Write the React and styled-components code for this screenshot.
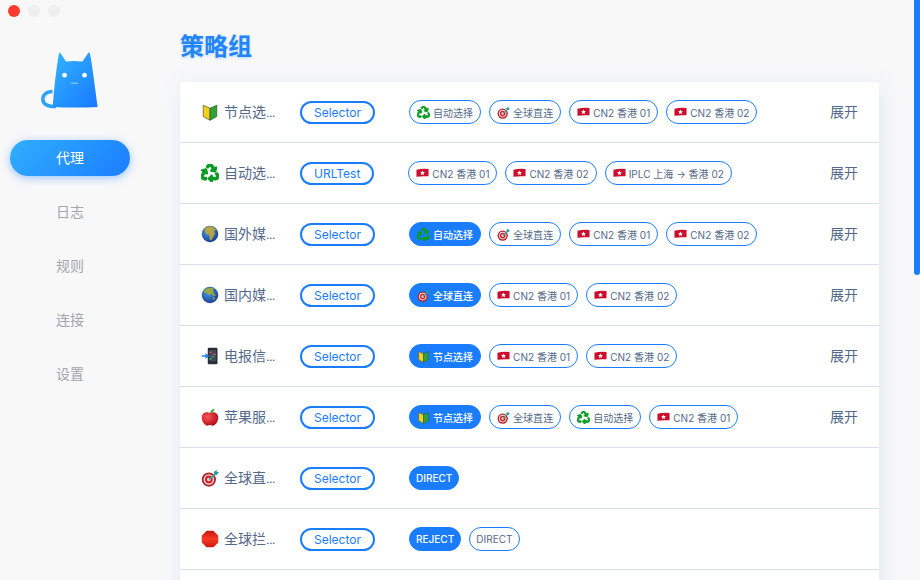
import React from "react";
import styled, { createGlobalStyle } from "styled-components";
import { FaRecycle } from "react-icons/fa";

const GlobalStyle = createGlobalStyle`
    html, body {
        margin: 0;
        height: 100%;
        overflow: hidden;
        background: #f8f8f9;
    }
    * { box-sizing: border-box; }
`;

const Window = styled.div`
    display: flex;
    width: 920px;
    height: 580px;
    overflow: hidden;
    position: relative;
    background: #f8f8f9;
    font-family: Inter, "Noto Sans CJK SC", sans-serif;
`;

const Sidebar = styled.aside`
    flex: 0 0 160px;
    display: flex;
    flex-direction: column;
    align-items: center;
`;

const TrafficLights = styled.div`
    align-self: flex-start;
    display: flex;
    gap: 8px;
    padding: 5px 0 0 8px;
`;

const Light = styled.span`
    width: 12px;
    height: 12px;
    border-radius: 50%;
    background: ${(p) => p.$color};
`;

const Logo = styled.svg`
    width: 62px;
    height: 60px;
    margin: 33px 0 30px -21px;
    display: block;
`;

const Nav = styled.nav`
    display: flex;
    flex-direction: column;
    gap: 18px;
    width: 120px;
    margin-right: 20px;
`;

const NavItem = styled.div`
    height: 36px;
    line-height: 35px;
    border-radius: 18px;
    text-align: center;
    font-size: 14px;
    color: ${(p) => (p.$active ? "#fff" : "#a2a6ad")};
    background: ${(p) => (p.$active ? "linear-gradient(135deg, #30aeff, #1a7dff)" : "transparent")};
    box-shadow: ${(p) => (p.$active ? "0 2px 8px rgba(42, 130, 255, 0.45)" : "none")};
`;

const Main = styled.main`
    flex: 1;
    padding: 30px 41px 0 20px;
    min-width: 0;
`;

const Title = styled.h1`
    margin: 0 0 17px;
    height: 35px;
    line-height: 34px;
    font-size: 24px;
    font-weight: 700;
    color: #1f85f8;
    text-shadow: 0 1px 3px rgba(31, 133, 248, 0.3);
`;

const Card = styled.section`
    background: #fff;
    border-radius: 4px 4px 0 0;
    box-shadow: 2px 5px 20px rgba(190, 210, 240, 0.45);
`;

const Row = styled.div`
    height: 61px;
    display: flex;
    align-items: center;
    padding: 0 21px;
    border-bottom: 1px solid #d8dfe8;
`;

const NameCell = styled.div`
    flex: 0 0 99px;
    display: flex;
    align-items: center;
    gap: 5px;
    color: #54698a;
    font-size: 14px;
`;

const EmojiBox = styled.span`
    flex: 0 0 ${(p) => p.$size}px;
    width: ${(p) => p.$size}px;
    height: ${(p) => p.$size}px;
    display: flex;
    align-items: center;
    justify-content: center;

    svg { display: block; }
`;

const Name = styled.span`
    width: 54px;
    line-height: 20px;
    font-family: Roboto, "Noto Sans CJK SC", sans-serif;
    white-space: nowrap;
    overflow: hidden;
    text-overflow: ellipsis;
`;

const TypeTag = styled.span`
    flex: none;
    height: 23px;
    line-height: 19px;
    padding: 0 12px;
    border: 2px solid #1a7dff;
    border-radius: 12px;
    font-size: 12px;
    color: #1a7dff;
`;

const Chips = styled.div`
    flex: 1;
    display: flex;
    gap: 8px;
    margin-left: 34px;
`;

const Chip = styled.span`
    height: 24px;
    display: flex;
    align-items: center;
    gap: 3px;
    padding: 0 ${(p) => (p.$plain ? 6 : 7)}px;
    border: 1px solid #1a7dff;
    border-radius: 12px;
    font-size: 10px;
    letter-spacing: 0.02px;
    white-space: nowrap;
    color: ${(p) => (p.$active ? "#fff" : "#54698a")};
    background: ${(p) => (p.$active ? "#1a7dff" : "#fff")};
    font-weight: ${(p) => (p.$active ? 500 : 400)};
`;

const Expand = styled.span`
    font-size: 14px;
    line-height: 20px;
    padding-bottom: 1px;
    color: #54698a;
`;

const ScrollThumb = styled.div`
    position: absolute;
    top: 0;
    right: 0;
    width: 6px;
    height: 275px;
    background: #1a7dff;
    border-radius: 0 0 3px 3px;
`;

const Shield = () => (
    <svg viewBox="0 0 24 24" width="100%" height="100%">
        <path d="M3 3 L12 7 L12 23 L3 18Z" fill="#f4d01f" stroke="#5c5a20" strokeWidth="1" />
        <path d="M21 3 L12 7 L12 23 L21 18Z" fill="#2fa33a" stroke="#2f5a28" strokeWidth="1" />
    </svg>
);

const Recycle = () => <FaRecycle size="100%" color="#0a9c24" stroke="#0a9c24" strokeWidth="36" />;

const Target = () => (
    <svg viewBox="0 0 24 24" width="100%" height="100%">
        <circle cx="10.5" cy="14" r="9.5" fill="#b3202a" />
        <circle cx="10.5" cy="14" r="7" fill="#f3e4dc" />
        <circle cx="10.5" cy="14" r="5.2" fill="#d2232e" />
        <circle cx="10.5" cy="14" r="2.4" fill="#f3e4dc" />
        <path d="M10.5 14 L20 6" stroke="#33a8a0" strokeWidth="2" />
        <path d="M17 4 L21 1 L21 4 L24 4 L21 8 L18 7Z" fill="#1f9f98" />
    </svg>
);

const Globe = ({ asia }) => (
    <svg viewBox="0 0 24 24" width="100%" height="100%">
        <defs>
            <radialGradient id={asia ? "sea-a" : "sea-b"} cx="40%" cy="35%" r="70%">
                <stop offset="0" stopColor="#4d9bea" />
                <stop offset="1" stopColor="#153c8a" />
            </radialGradient>
        </defs>
        <circle cx="12" cy="12" r="11" fill={`url(#${asia ? "sea-a" : "sea-b"})`} />
        {asia ? (
            <path d="M4 6 Q9 1 17 3 Q15 7 17 10 L20 13 L16 13 L14 10 L11 12 L7 9 L4 9Z M15 15 L19 16 L17 19Z" fill="#9aa741" />
        ) : (
            <path d="M5 4 Q9 1 15 2 L20 6 L17 9 L19 11 L16 16 L14 20 L12 20 L11 13 L7 12 L5 9Z" fill="#b3a545" />
        )}
    </svg>
);

const Phone = () => (
    <svg viewBox="0 0 24 24" width="100%" height="100%">
        <rect x="9" y="1" width="13" height="22" rx="1.5" fill="#2a2e36" />
        <rect x="11" y="4" width="9" height="15" fill="#3b4a5c" />
        <path d="M11 6h3v2h-3z M16 9h4v2h-4z" fill="#d84b4b" />
        <path d="M14 12h3v2h-3z M11 15h3v2h-3z" fill="#48a95a" />
        <path d="M1 11h5V8l5 4-5 4v-3H1z" fill="#1f80e8" />
    </svg>
);

const Apple = () => (
    <svg viewBox="0 0 24 24" width="100%" height="100%">
        <defs>
            <radialGradient id="apple-red" cx="35%" cy="35%" r="70%">
                <stop offset="0" stopColor="#f4555a" />
                <stop offset="1" stopColor="#b50d14" />
            </radialGradient>
        </defs>
        <path d="M12 7 C15 4.5 23 5 23 13 C23 19 18 24 15 23.5 C13.5 23.2 12.8 22.8 12 22.8 C11.2 22.8 10.5 23.2 9 23.5 C6 24 1 19 1 13 C1 5 9 4.5 12 7Z" fill="url(#apple-red)" />
        <path d="M12 7 Q13 2 18 1 Q17 6 12 7Z" fill="#3c9a30" />
    </svg>
);

const Stop = () => (
    <svg viewBox="0 0 24 24" width="100%" height="100%">
        <defs>
            <linearGradient id="stop-red" x1="0" y1="0" x2="0" y2="1">
                <stop offset="0" stopColor="#c81410" />
                <stop offset="0.5" stopColor="#f63a26" />
                <stop offset="1" stopColor="#d3150e" />
            </linearGradient>
        </defs>
        <path d="M7.5 1h9L23 7.5v9L16.5 23h-9L1 16.5v-9Z" fill="url(#stop-red)" />
    </svg>
);

const Flag = () => (
    <svg viewBox="0 0 14 10" width="13" height="10">
        <path d="M0.5 1.5 Q7 0 13.5 0.8 V8.6 Q7 8 0.5 9Z" fill="#cc0d2b" />
        <path d="M7 2.2 L7.8 4 L9.6 4.2 L8.3 5.4 L8.7 7.2 L7 6.3 L5.3 7.2 L5.7 5.4 L4.4 4.2 L6.2 4Z" fill="#fff" />
    </svg>
);

const emojis = {
    shield: <Shield />,
    recycle: <Recycle />,
    target: <Target />,
    africa: <Globe />,
    asia: <Globe asia />,
    phone: <Phone />,
    apple: <Apple />,
    stop: <Stop />,
};

const auto = { icon: "recycle", label: "自动选择" };
const direct = { icon: "target", label: "全球直连" };
const select = { icon: "shield", label: "节点选择" };
const hk1 = { flag: true, label: "CN2 香港 01" };
const hk2 = { flag: true, label: "CN2 香港 02" };

const groups = [
    { icon: "shield", name: "节点选择", type: "Selector", expand: true, chips: [auto, direct, hk1, hk2], active: -1 },
    { icon: "recycle", name: "自动选择", type: "URLTest", expand: true, chips: [hk1, hk2, { flag: true, label: "IPLC 上海 → 香港 02" }], active: -1 },
    { icon: "africa", name: "国外媒体", type: "Selector", expand: true, chips: [auto, direct, hk1, hk2], active: 0 },
    { icon: "asia", name: "国内媒体", type: "Selector", expand: true, chips: [direct, hk1, hk2], active: 0 },
    { icon: "phone", name: "电报信息", type: "Selector", expand: true, chips: [select, hk1, hk2], active: 0 },
    { icon: "apple", name: "苹果服务", type: "Selector", expand: true, chips: [select, direct, auto, hk1], active: 0 },
    { icon: "target", name: "全球直连", type: "Selector", chips: [{ label: "DIRECT" }], active: 0 },
    { icon: "stop", name: "全球拦截", type: "Selector", chips: [{ label: "REJECT" }, { label: "DIRECT" }], active: 0 },
];

const navItems = ["代理", "日志", "规则", "连接", "设置"];

const CatLogo = () => (
    <Logo viewBox="0 0 62 60">
        <defs>
            <linearGradient id="cat" x1="0.1" y1="0.1" x2="0.9" y2="0.95">
                <stop offset="0" stopColor="#30aeff" />
                <stop offset="1" stopColor="#1a7dff" />
            </linearGradient>
        </defs>
        <path d="M13.5 41.5 C7 41.5 3.5 45.5 3.8 49.5 C4.2 54.5 10 56.6 17 56.6" fill="none" stroke="#2aa3ff" strokeWidth="3.4" />
        <path
            d="M20 3.2 Q20.5 2.2 21.5 3.2 L27 11.5 Q35 10.3 43.5 11.5 L49 3.2 Q50.3 2 50.8 3.2 C53 12 57 45 58.7 57 Q36 58 13.7 57 C15 40 17 20 20 3.2Z"
            fill="url(#cat)"
        />
        <circle cx="25.5" cy="25.2" r="2.4" fill="#fff" />
        <circle cx="45.5" cy="25.2" r="2.4" fill="#fff" />
        <path d="M32 33.2 H39" stroke="#bfe2ff" strokeWidth="0.8" />
    </Logo>
);

const App = () => {
    return (
        <Window>
            <GlobalStyle />
            <Sidebar>
                <TrafficLights>
                    <Light $color="#ff3b30" />
                    <Light $color="#efefef" />
                    <Light $color="#efefef" />
                </TrafficLights>
                <CatLogo />
                <Nav>
                    {navItems.map((item, i) => (
                        <NavItem key={item} $active={i === 0}>{item}</NavItem>
                    ))}
                </Nav>
            </Sidebar>
            <Main>
                <Title>策略组</Title>
                <Card>
                    {groups.map((group) => (
                        <Row key={group.name}>
                            <NameCell>
                                <EmojiBox $size={18}>{emojis[group.icon]}</EmojiBox>
                                <Name>{group.name}</Name>
                            </NameCell>
                            <TypeTag>{group.type}</TypeTag>
                            <Chips>
                                {group.chips.map((chip, i) => (
                                    <Chip
                                        key={chip.label}
                                        $active={i === group.active}
                                        $plain={!chip.icon && !chip.flag}
                                    >
                                        {chip.icon && <EmojiBox $size={13}>{emojis[chip.icon]}</EmojiBox>}
                                        {chip.flag && <Flag />}
                                        {chip.label}
                                    </Chip>
                                ))}
                            </Chips>
                            {group.expand && <Expand>展开</Expand>}
                        </Row>
                    ))}
                    <Row />
                </Card>
            </Main>
            <ScrollThumb />
        </Window>
    );
};

export default App;
